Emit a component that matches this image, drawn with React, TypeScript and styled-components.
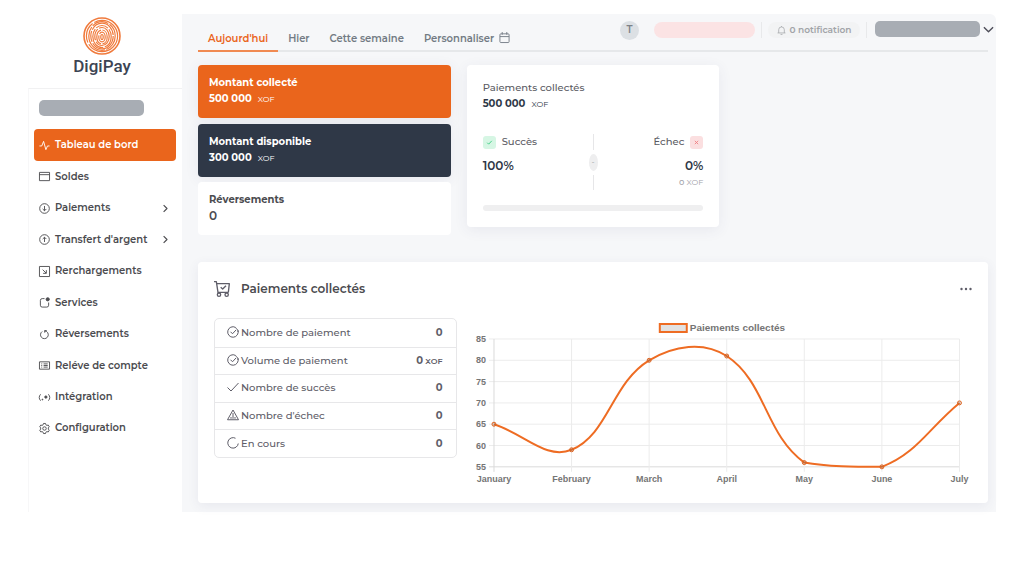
import React from "react";
import styled, { createGlobalStyle, css } from "styled-components";

const color = {
  orange: "#ea651c",
  navy: "#2f3847",
  ink: "#4b4b4f",
  slate: "#5e5d68",
  muted: "#737b84",
  line: "#ececee",
  canvas: "#f6f7f9",
  mask: "#a8adb4",
};

const GlobalStyle = createGlobalStyle`
  *, *::before, *::after { box-sizing: border-box; }
  body {
    margin: 0;
    background: #fff;
    color: ${color.ink};
    font-family: Montserrat, Inter, "Liberation Sans", sans-serif;
    font-size: 10px;
    line-height: 16px;
  }
  button { font: inherit; color: inherit; background: none; border: 0; padding: 0; cursor: pointer; }
  a { color: inherit; text-decoration: none; }
  h1, h2, p, ul, dl, dd { margin: 0; padding: 0; }
  ul { list-style: none; }
  svg { display: block; flex: none; }
`;

/* ---------- icons ---------- */

const glyphs = {
  activity: <path d="M1 13h5l4-10 5 18 3.500-8H23" />,
  window: <path d="M1 3h22v18H1zM1 8h22" />,
  arrowDownCircle: (
    <>
      <circle cx="12" cy="12" r="10.500" />
      <path d="M12 6.500v10.500M8 13l4 4 4-4" />
    </>
  ),
  arrowUpCircle: (
    <>
      <circle cx="12" cy="12" r="10.500" />
      <path d="M12 17.500V7M8 11l4-4 4 4" />
    </>
  ),
  squareArrow: <path d="M1 1h22v22H1zM8 8l7.500 7.500M16 9v7H9" />,
  squareDot: (
    <>
      <path d="M12 3.500H7a4 4 0 0 0-4 4V18a4 4 0 0 0 4 4h10a4 4 0 0 0 4-4v-6" />
      <circle cx="19" cy="5" r="3.500" fill="currentColor" />
    </>
  ),
  reload: <path d="M7 5.500A8.500 8.500 0 1 0 16.500 5.500L12 4M12.500 8V3.500h4.500" />,
  listCard: (
    <path d="M1 4h22v16H1zM5 8.500h2M5 12h2M5 15.500h2M10 8.500h9M10 12h9M10 15.500h9" />
  ),
  signal: (
    <>
      <path d="M3.500 5c-4 4.500-4 9.500 0 14M20.500 5c4 4.500 4 9.500 0 14" />
      <circle cx="7.500" cy="16.500" r="1" fill="currentColor" />
      <circle cx="15" cy="11" r="2.500" fill="currentColor" />
    </>
  ),
  gear: (
    <>
      <circle cx="12" cy="12" r="3.800" />
      <path d="M9.800 1h4.400l.9 3 2.100 1.200 3-.7 2.200 3.800L20.300 10.600v2.800l2.100 2.300-2.200 3.800-3-.7-2.100 1.200-.9 3H9.800l-.9-3-2.100-1.200-3 .7-2.200-3.800 2.100-2.300v-2.800L1.600 8.300l2.200-3.800 3 .7L8.900 4z" />
    </>
  ),
  chevronRight: <path d="M7 3l9 9-9 9" />,
  chevronDown: <path d="M2 7l10 10L22 7" />,
  calendar: (
    <path d="M4 4h16a2 2 0 0 1 2 2v15a2 2 0 0 1-2 2H4a2 2 0 0 1-2-2V6a2 2 0 0 1 2-2zM2 10h20M7 0v6M17 0v6" />
  ),
  bell: <path d="M1.500 18.500h21M4.500 18.500V10a7.500 7.500 0 0 1 15 0v8.500M9.500 22.500h5M12 0v2.500" />,
  check: <path d="M1 13l7 7L23 4" />,
  cross: <path d="M4 4l16 16M20 4L4 20" />,
  checkCircle: (
    <>
      <path d="M21.800 8.500A10.500 10.500 0 1 1 17 2.800l2 2.700 2.800 3 .6 3.500" />
      <path d="M7 11.500l4 4L18 8" />
    </>
  ),
  warning: <path d="M12 2L1 21.500h22zM12 8v11.500M8 16v3.500M16 16v3.500" />,
  loader: <path d="M17 2.500A10.500 10.500 0 1 0 22.500 13" />,
  cart: (
    <>
      <path d="M0 1h3.500L6 17h15.500M4 4h19l-1.500 13" />
      <path d="M10 9.500l3 2.500 5-5" />
      <circle cx="7.500" cy="20.500" r="2.500" />
      <circle cx="19" cy="20.500" r="2.500" />
    </>
  ),
  dots: (
    <g fill="currentColor" stroke="none">
      <circle cx="3" cy="12" r="2.400" />
      <circle cx="12" cy="12" r="2.400" />
      <circle cx="21" cy="12" r="2.400" />
    </g>
  ),
};

type GlyphName = keyof typeof glyphs;

const Icon = ({ name, size = 11, weight = 2 }: { name: GlyphName; size?: number; weight?: number }) => (
  <svg
    width={size}
    height={size}
    viewBox="0 0 24 24"
    fill="none"
    stroke="currentColor"
    strokeWidth={weight}
    strokeLinejoin="round"
    overflow="visible"
    aria-hidden="true"
  >
    {glyphs[name]}
  </svg>
);

const Fingerprint = () => (
  <svg width="38" height="38" viewBox="0 0 38 38" fill="none" stroke="#f07a3c" aria-hidden="true">
    <circle cx="19" cy="19" r="18" strokeWidth="1.600" />
    <g strokeWidth="1.200">
      <ellipse cx="19" cy="20" rx="1.200" ry="2.500" />
      <ellipse cx="19" cy="20" rx="3.200" ry="4.800" strokeDasharray="14 1.500" />
      <ellipse cx="19" cy="20" rx="5.200" ry="7" strokeDasharray="9 1.500 17 1.500" />
      <ellipse cx="19" cy="19.500" rx="7.200" ry="9" strokeDasharray="20 1.500 12 1.500" />
      <ellipse cx="19" cy="19.500" rx="9.200" ry="11" strokeDasharray="13 1.500 25 1.500" />
      <ellipse cx="19" cy="19" rx="11.200" ry="12.800" strokeDasharray="30 1.500 11 1.500" />
      <ellipse cx="19" cy="19" rx="13.200" ry="14.300" strokeDasharray="17 1.500 34 1.500" />
      <circle cx="19" cy="19" r="15.600" strokeDasharray="40 2 21 2" />
    </g>
  </svg>
);

/* ---------- shell ---------- */

const Shell = styled.div`
  display: flex;
  margin: 14px 28px 64px;
`;

const Sidebar = styled.aside`
  flex: 0 0 154px;
  min-width: 0;
  display: flex;
  flex-direction: column;
`;

const Brand = styled.a`
  display: flex;
  flex-direction: column;
  align-items: center;
  height: 74px;
  padding: 3px 6px 0 0;
  color: #3c4453;
  font: 500 17px/22px Roboto, "Liberation Sans", sans-serif;
`;

const SideBody = styled.div`
  flex: 1;
  padding: 11px 6px 11px 5px;
  border-top: 1px solid #f1f1f2;
  border-left: 1px solid #f7f7f8;
`;

const Mask = styled.div<{ $pink?: boolean }>`
  width: 105px;
  height: 16px;
  border-radius: 5px;
  background: ${color.mask};
  ${(p) => p.$pink && css`
    width: 101px;
    border-radius: 8px;
    background: #fbe3e4;
  `}
`;

const AccountMask = styled(Mask)`
  margin: 0 5px 13px;
`;

const NavList = styled.ul`
  display: flex;
  flex-direction: column;
  justify-content: space-between;
  min-height: 315px;
`;

const NavLink = styled.a<{ $active?: boolean }>`
  display: flex;
  align-items: center;
  gap: 5px;
  height: ${(p) => (p.$active ? 32 : 31)}px;
  padding: 0 6px 0 5px;
  border-radius: 4px;
  font-weight: 600;
  color: ${(p) => (p.$active ? "#fff" : color.ink)};
  background: ${(p) => (p.$active ? color.orange : "transparent")};
`;

const NavLabel = styled.span`
  flex: 1;
  white-space: nowrap;
`;

const Main = styled.main`
  flex: 1;
  min-width: 0;
  padding: 0 8px 9px 16px;
  border-radius: 0 6px 0 0;
  background: ${color.canvas};
`;

/* ---------- top bar ---------- */

const TopBar = styled.header`
  display: flex;
  justify-content: space-between;
  height: 38px;
  border-bottom: 2px solid #e6e8ea;
`;

const Tabs = styled.nav`
  display: flex;
  align-self: flex-end;
`;

const Tab = styled.button<{ $active?: boolean }>`
  display: flex;
  align-items: center;
  gap: 5px;
  height: 25px;
  margin-bottom: -2px;
  padding: 0 10px;
  border-bottom: 2px solid transparent;
  font-weight: 600;
  white-space: nowrap;
  color: ${color.muted};
  ${(p) => p.$active && css`
    color: ${color.orange};
    border-color: #f08a52;
  `}

  svg { margin-bottom: 3px; }
`;

const Tools = styled.div`
  display: flex;
  align-items: center;
  gap: 6px;
  height: 32px;
  margin-right: -6px;
`;

const Avatar = styled.span`
  display: grid;
  place-items: center;
  width: 19px;
  height: 19px;
  margin-right: 9px;
  border-radius: 50%;
  background: #dce0e4;
  font-weight: 600;
  color: #7d8288;
`;

const Separator = styled.span`
  width: 1px;
  height: 16px;
  background: #e8e9eb;
`;

const Notice = styled.button`
  display: flex;
  align-items: center;
  justify-content: center;
  gap: 4px;
  width: 92px;
  height: 16px;
  border-radius: 8px;
  background: #f2f3f4;
  font-size: 9px;
  font-weight: 600;
  color: #a1a4a8;
`;

const Account = styled.button`
  display: flex;
  align-items: center;
  gap: 3px;
  margin: -2px 0 0 2px;
  color: #4d4d58;
`;

/* ---------- cards ---------- */

const Summary = styled.section`
  display: grid;
  grid-template-columns: repeat(3, 1fr);
  align-items: start;
  gap: 16px;
  margin: 13px 0 27px;
`;

const Stack = styled.div`
  display: flex;
  flex-direction: column;
  justify-content: space-between;
  min-height: 170px;
`;

const StatCard = styled.article<{ $tone?: string }>`
  height: 53px;
  padding: 10px 11px;
  border-radius: 4px;
  background: ${(p) => p.$tone ?? "#fff"};
  color: ${(p) => (p.$tone ? "#fff" : color.ink)};
  box-shadow: ${(p) => (p.$tone ? "0 2px 14px rgba(60, 70, 110, 0.08)" : "none")};
`;

const CardLabel = styled.h2<{ $plain?: boolean }>`
  font-size: 10px;
  line-height: 16px;
  font-weight: ${(p) => (p.$plain ? 500 : 700)};
  color: inherit;
`;

const Amount = styled.p<{ $plain?: boolean }>`
  display: flex;
  align-items: baseline;
  gap: 6px;
  font-size: ${(p) => (p.$plain ? 12 : 10)}px;
  line-height: 16px;
  font-weight: ${(p) => (p.$plain ? 600 : 700)};
`;

const Unit = styled.small`
  font-size: 8px;
  font-weight: 400;
`;

const Panel = styled.article`
  padding: 15px 16px;
  border-radius: 4px;
  background: #fff;
  box-shadow: 0 3px 14px rgba(60, 70, 110, 0.08);
`;

const CollectPanel = styled(Panel)`
  min-height: 162px;
  color: ${color.navy};
  ${CardLabel} { color: #5b5b63; }
`;

const Split = styled.div`
  display: flex;
  justify-content: space-between;
  margin: 22px 0 15px;
`;

const Outcome = styled.div<{ $end?: boolean }>`
  flex: 1;
  display: flex;
  flex-direction: column;
  align-items: ${(p) => (p.$end ? "flex-end" : "flex-start")};
`;

const OutcomeHead = styled.div`
  display: flex;
  align-items: center;
  gap: 6px;
  height: 16px;
  margin-bottom: 8px;
  font-weight: 500;
  color: #5b5b63;
`;

const Badge = styled.span<{ $bad?: boolean }>`
  display: grid;
  place-items: center;
  width: 13px;
  height: 13px;
  border-radius: 3px;
  background: ${(p) => (p.$bad ? "#fbdfe0" : "#d6f6e4")};
  color: ${(p) => (p.$bad ? "#ef7a7c" : "#2fc97a")};
`;

const Percent = styled.strong`
  font-size: 12px;
  line-height: 16px;
  font-weight: 600;
`;

const Fine = styled.span`
  font-size: 8px;
  line-height: 16px;
  font-weight: 500;
  color: #a3a3aa;
`;

const Divider = styled.div`
  display: flex;
  flex-direction: column;
  align-items: center;
  gap: 4px;
  height: 56px;
  font-size: 8px;
  line-height: 8px;
  color: #9a9a9f;

  &::before, &::after {
    content: "";
    flex: 1;
    width: 1px;
    background: #e6e6e8;
  }
`;

const Dash = styled.span`
  display: grid;
  place-items: center;
  width: 9px;
  height: 17px;
  border-radius: 50%;
  background: #eeeeef;
`;

const Track = styled.div`
  height: 6px;
  border-radius: 3px;
  background: #efeff0;
`;

const ChartPanel = styled(Panel)`
  min-height: 241px;
  box-shadow: 0 3px 12px rgba(60, 70, 110, 0.08);
`;

const PanelHead = styled.div`
  display: flex;
  align-items: center;
  gap: 11px;
  height: 24px;
  margin-bottom: 17px;
  color: ${color.slate};
`;

const PanelTitle = styled.h2`
  flex: 1;
  font-size: 12px;
  line-height: 16px;
  font-weight: 600;
  color: ${color.ink};
`;

const PanelBody = styled.div`
  display: flex;
  align-items: flex-start;
  gap: 16px;
`;

const Metrics = styled.dl`
  flex: 0 0 32%;
  display: grid;
  grid-auto-rows: 1fr;
  min-height: 140px;
  border: 1px solid #e7e7e9;
  border-radius: 5px;
  color: ${color.slate};
`;

const Metric = styled.div`
  display: flex;
  align-items: center;
  justify-content: space-between;
  padding: 0 13px 0 12px;
  & + & { border-top: 1px solid #e7e7e9; }
`;

const MetricName = styled.dt`
  display: flex;
  align-items: center;
  gap: 2px;
  font-weight: 500;

  svg { margin-bottom: 2px; }
`;

const MetricValue = styled.dd`
  font-weight: 700;
  small { font-size: 8px; font-weight: 600; }
`;

const ChartBox = styled.div`
  flex: 1;
  min-width: 0;
  padding-top: 2px;

  svg { width: 100%; height: auto; }
  text { font: 700 9px "Liberation Sans", Arial, sans-serif; fill: #757575; }
  text.legend { font-size: 10px; }
`;

/* ---------- chart ---------- */

const months = ["January", "February", "March", "April", "May", "June", "July"];
const values = [65, 59, 80, 81, 56, 55, 70];
const ticks = [85, 80, 75, 70, 65, 60, 55];
const area = { left: 21, top: 19, width: 466, height: 128 };

type Point = { x: number; y: number };
const toX = (i: number) => area.left + (i * area.width) / (months.length - 1);
const toY = (v: number) => area.top + ((85 - v) * area.height) / 30;
const clampY = (y: number) => Math.min(area.top + area.height, Math.max(area.top, y));

function smoothPath(points: Point[], tension: number) {
  const handles = points.map((cur, i) => {
    const prev = points[i - 1] ?? cur;
    const next = points[i + 1] ?? cur;
    const before = Math.hypot(cur.x - prev.x, cur.y - prev.y);
    const after = Math.hypot(next.x - cur.x, next.y - cur.y);
    const a = (tension * before) / (before + after);
    const b = (tension * after) / (before + after);
    return {
      in: { x: cur.x - a * (next.x - prev.x), y: clampY(cur.y - a * (next.y - prev.y)) },
      out: { x: cur.x + b * (next.x - prev.x), y: clampY(cur.y + b * (next.y - prev.y)) },
    };
  });
  return points.reduce((path, p, i) => {
    if (i === 0) return `M${p.x} ${p.y}`;
    const from = handles[i - 1].out;
    const to = handles[i].in;
    return `${path}C${from.x} ${from.y} ${to.x} ${to.y} ${p.x} ${p.y}`;
  }, "");
}

const LineChart = () => {
  const points = values.map((v, i) => ({ x: toX(i), y: toY(v) }));
  const bottom = area.top + area.height;
  const right = area.left + area.width;
  return (
    <svg viewBox="0 0 500 168" role="img" aria-label="Paiements collectés">
      <rect x="187" y="4" width="27" height="8" fill="#e2e2e2" stroke="#ee6c23" strokeWidth="2" />
      <text className="legend" x="217" y="11">Paiements collectés</text>
      {ticks.map((t) => (
        <g key={t}>
          <path d={`M${area.left - 5} ${toY(t)}H${right}`} stroke={t === 55 ? "#dadada" : "#ececec"} />
          <text x={area.left - 8} y={toY(t) + 3} textAnchor="end">{t}</text>
        </g>
      ))}
      {months.map((m, i) => (
        <g key={m}>
          <path d={`M${toX(i)} ${area.top}V${bottom + 5}`} stroke={i === 0 ? "#dadada" : "#ececec"} />
          <text x={toX(i)} y={bottom + 15} textAnchor="middle">{m}</text>
        </g>
      ))}
      <path d={smoothPath(points, 0.4)} fill="none" stroke="#ee6c23" strokeWidth="2" />
      {points.map((p) => (
        <circle key={p.x} cx={p.x} cy={p.y} r="2" fill="rgba(120,90,80,.25)" stroke="#df6420" />
      ))}
    </svg>
  );
};

/* ---------- data ---------- */

const navItems: { icon: GlyphName; label: string; more?: boolean }[] = [
  { icon: "activity", label: "Tableau de bord" },
  { icon: "window", label: "Soldes" },
  { icon: "arrowDownCircle", label: "Paiements", more: true },
  { icon: "arrowUpCircle", label: "Transfert d'argent", more: true },
  { icon: "squareArrow", label: "Rerchargements" },
  { icon: "squareDot", label: "Services" },
  { icon: "reload", label: "Réversements" },
  { icon: "listCard", label: "Reléve de compte" },
  { icon: "signal", label: "Intégration" },
  { icon: "gear", label: "Configuration" },
];

const metrics: { icon: GlyphName; label: string; unit?: string }[] = [
  { icon: "checkCircle", label: "Nombre de paiement" },
  { icon: "checkCircle", label: "Volume de paiement", unit: "XOF" },
  { icon: "check", label: "Nombre de succès" },
  { icon: "warning", label: "Nombre d'échec" },
  { icon: "loader", label: "En cours" },
];

export default function App() {
  return (
    <>
      <GlobalStyle />
      <Shell>
        <Sidebar>
          <Brand href="#">
            <Fingerprint />
            DigiPay
          </Brand>
          <SideBody>
            <AccountMask />
            <nav>
              <NavList>
                {navItems.map((item, i) => (
                  <li key={item.label}>
                    <NavLink href="#" $active={i === 0}>
                      <Icon name={item.icon} />
                      <NavLabel>{item.label}</NavLabel>
                      {item.more && <Icon name="chevronRight" size={9} weight={3} />}
                    </NavLink>
                  </li>
                ))}
              </NavList>
            </nav>
          </SideBody>
        </Sidebar>

        <Main>
          <TopBar>
            <Tabs>
              <Tab $active>Aujourd'hui</Tab>
              <Tab>Hier</Tab>
              <Tab>Cette semaine</Tab>
              <Tab>
                Personnaliser
                <Icon name="calendar" />
              </Tab>
            </Tabs>
            <Tools>
              <Avatar>T</Avatar>
              <Mask $pink />
              <Separator />
              <Notice>
                <Icon name="bell" size={9} />
                0 notification
              </Notice>
              <Separator />
              <Account aria-label="Compte">
                <Mask />
                <Icon name="chevronDown" weight={3} />
              </Account>
            </Tools>
          </TopBar>

          <Summary>
            <Stack>
              <StatCard $tone={color.orange}>
                <CardLabel>Montant collecté</CardLabel>
                <Amount>500 000 <Unit>XOF</Unit></Amount>
              </StatCard>
              <StatCard $tone={color.navy}>
                <CardLabel>Montant disponible</CardLabel>
                <Amount>300 000 <Unit>XOF</Unit></Amount>
              </StatCard>
              <StatCard>
                <CardLabel>Réversements</CardLabel>
                <Amount $plain>0</Amount>
              </StatCard>
            </Stack>
            <CollectPanel>
              <CardLabel $plain>Paiements collectés</CardLabel>
              <Amount>500 000 <Unit>XOF</Unit></Amount>
              <Split>
                <Outcome>
                  <OutcomeHead>
                    <Badge><Icon name="check" size={5} weight={4} /></Badge>
                    Succès
                  </OutcomeHead>
                  <Percent>100%</Percent>
                </Outcome>
                <Divider><Dash>-</Dash></Divider>
                <Outcome $end>
                  <OutcomeHead>
                    Échec
                    <Badge $bad><Icon name="cross" size={5} weight={4} /></Badge>
                  </OutcomeHead>
                  <Percent>0%</Percent>
                  <Fine>0 <Unit>XOF</Unit></Fine>
                </Outcome>
              </Split>
              <Track />
            </CollectPanel>
          </Summary>

          <ChartPanel>
            <PanelHead>
              <Icon name="cart" size={16} />
              <PanelTitle>Paiements collectés</PanelTitle>
              <button aria-label="Options"><Icon name="dots" size={12} /></button>
            </PanelHead>
            <PanelBody>
              <Metrics>
                {metrics.map((m) => (
                  <Metric key={m.label}>
                    <MetricName>
                      <Icon name={m.icon} size={12} weight={2} />
                      {m.label}
                    </MetricName>
                    <MetricValue>0{m.unit && <small> {m.unit}</small>}</MetricValue>
                  </Metric>
                ))}
              </Metrics>
              <ChartBox>
                <LineChart />
              </ChartBox>
            </PanelBody>
          </ChartPanel>
        </Main>
      </Shell>
    </>
  );
}
